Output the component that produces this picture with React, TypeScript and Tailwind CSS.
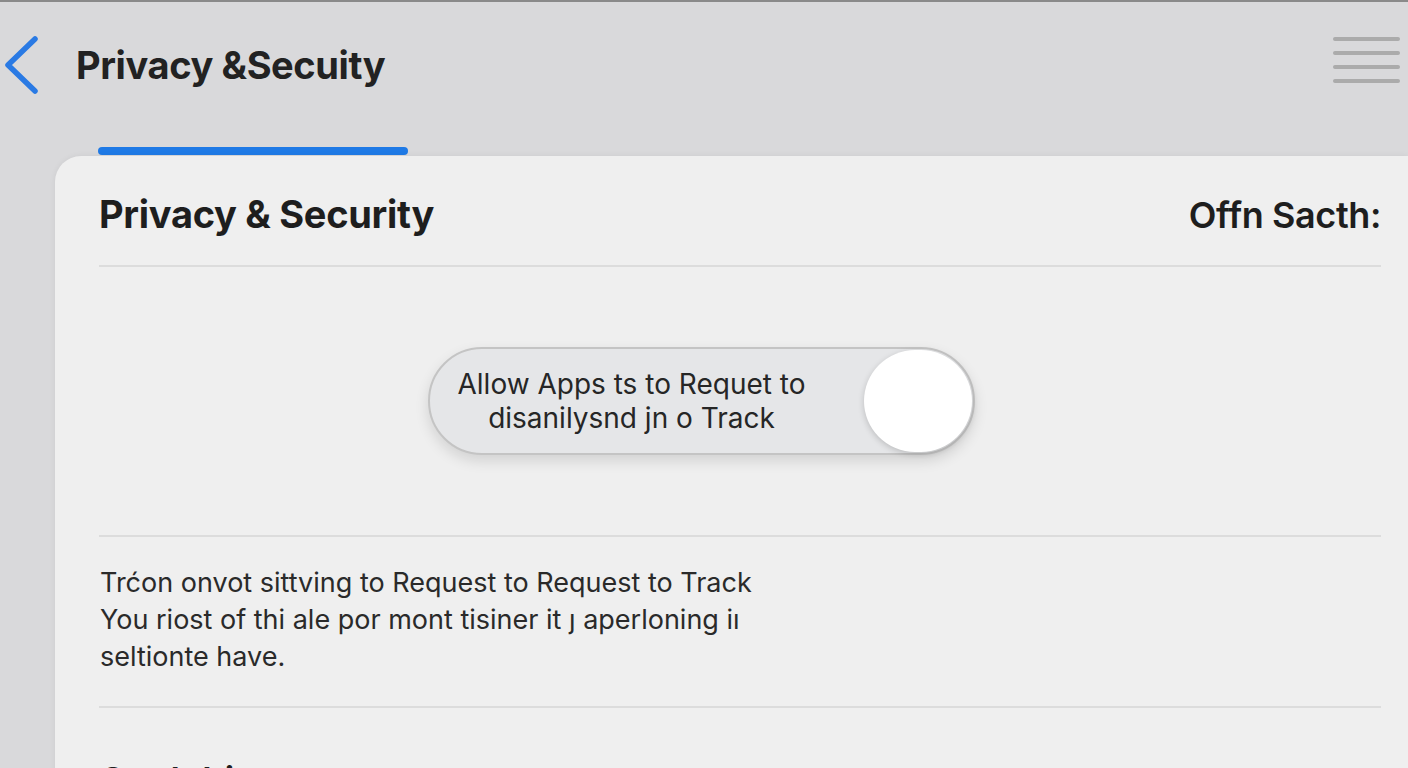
export default function App() {
  return (
    <div
      className="h-[768px] w-[1408px] overflow-hidden border-t-2 border-[#8a8a8a] bg-[#d9d9db] text-[#1f1f1f]"
      style={{ fontFamily: "Inter, 'Noto Sans', sans-serif" }}
    >
      <header className="flex h-[145px] items-start justify-between">
        <div className="flex items-center pt-[33px]">
          <svg width="40" height="60" viewBox="0 0 40 60" className="ml-[1px]">
            <path d="M34 4 L7 30 L34 56" fill="none" stroke="#2a7ae4" strokeWidth="5.5" strokeLinecap="round" strokeLinejoin="round" />
          </svg>
          <h1 className="ml-[35px] text-[38px] font-bold tracking-[-0.4px] text-[#222]">Privacy &amp;Secuity</h1>
        </div>
        <div className="mr-[8px] mt-[35px] flex w-[67px] flex-col gap-[10px]">
          <span className="h-[4px] rounded-full bg-[#ababab]" />
          <span className="h-[4px] rounded-full bg-[#ababab]" />
          <span className="h-[4px] rounded-full bg-[#ababab]" />
          <span className="h-[4px] rounded-full bg-[#ababab]" />
        </div>
      </header>

      <div className="ml-[98px] h-[8px] w-[310px] rounded-full bg-[#1f7ae6]" />

      <main className="ml-[55px] mt-[1px] h-[700px] rounded-tl-[26px] bg-[#efefef] pl-[44px] pr-[27px] shadow-[0_0_6px_rgba(0,0,0,0.06)]">
        <div className="flex h-[109px] items-center justify-between pt-[8px]">
          <h2 className="text-[38px] font-bold tracking-[-0.3px] text-[#1e1e1e]">Privacy &amp; Security</h2>
          <span className="text-[36px] font-semibold tracking-[-0.4px] text-[#1e1e1e]">Offn Sacth:</span>
        </div>
        <div className="h-[2px] bg-[#dcdcdc]" />

        <div className="flex h-[268px] items-center justify-center pr-[78px]">
          <div className="relative flex h-[108px] w-[547px] items-center rounded-full border-2 border-[#c4c4c4] bg-[#e5e6e8] shadow-[0_6px_14px_rgba(0,0,0,0.12)]">
            <p className="w-[404px] text-center text-[28px] leading-[34px] text-[#262626]">
              Allow Apps ts to Requet to
              <br />
              disanilysnd jn o Track
            </p>
            <span className="absolute right-[1px] top-[1px] h-[102px] w-[108px] rounded-full bg-white shadow-[0_2px_6px_rgba(0,0,0,0.18)]" />
          </div>
        </div>
        <div className="h-[2px] bg-[#dcdcdc]" />

        <p className="pb-[31px] pl-[1px] pt-[27px] text-[27px] leading-[37px] text-[#2a2a2a]">
          Trćon onvot sittving to Request to Request to Track
          <br />
          You riost of thi ale por mont tisiner it ȷ aperloning iı
          <br />
          seltionte have.
        </p>
        <div className="h-[2px] bg-[#dcdcdc]" />

        <h3 className="pt-[45px] text-[36px] font-semibold text-[#1e1e1e]">Otn lt ltings</h3>
      </main>
    </div>
  );
}
